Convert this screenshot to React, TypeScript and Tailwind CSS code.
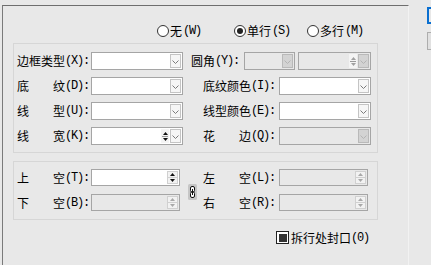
import React from 'react'

const mono = "font-['Liberation_Mono',monospace] text-[12px] tracking-[-1.2px]"

function Lbl({ head, tail, hot, className = '' }: { head?: string; tail: string; hot: string; className?: string }) {
  return (
    <div className={`shrink-0 flex items-center justify-between whitespace-nowrap text-[12px] leading-none text-black ${className}`}>
      {head && <span>{head}</span>}
      <span className="flex items-center whitespace-nowrap shrink-0">
        <span>{tail}</span>
        <span className={mono}>({hot}):</span>
      </span>
    </div>
  )
}

function Chevron({ dim }: { dim?: boolean }) {
  return (
    <svg width="7" height="4" viewBox="0 0 7 4" className="mb-[3px]">
      <path d="M0.5 0.5 L3.5 3.5 L6.5 0.5" fill="none" stroke={dim ? '#b4b4b4' : '#7a7a7a'} strokeWidth="1" />
    </svg>
  )
}

function MiniSpin({ dim }: { dim?: boolean }) {
  const c = dim ? '#a0a0a0' : '#111'
  return (
    <div className="w-[8px] mr-[1px] flex flex-col items-center justify-center gap-px bg-[#f4f4f4]">
      <svg width="5" height="3" viewBox="0 0 5 3"><path d="M0 3 L2.5 0 L5 3 Z" fill={c} /></svg>
      <div className="w-[6px] h-px bg-[#9a9a9a]" />
      <svg width="5" height="3" viewBox="0 0 5 3"><path d="M0 0 L2.5 3 L5 0 Z" fill={c} /></svg>
    </div>
  )
}

function Combo({ className = '', disabled, spin }: { className?: string; disabled?: boolean; spin?: boolean }) {
  return (
    <div
      className={`shrink-0 h-[18px] border border-[#a5a5a5] p-px flex justify-end ${
        disabled ? 'bg-[#e8e8e8]' : 'bg-white'
      } ${className}`}
    >
      {spin && <MiniSpin dim={disabled} />}
      <div
        className={`w-[11px] border flex items-end justify-center ${
          disabled ? 'border-[#b9b9b9] bg-[#d3d3d3]' : 'border-[#c4c4c4] bg-[#f6f6f6]'
        }`}
      >
        <Chevron dim={disabled} />
      </div>
    </div>
  )
}

function SpinBox({ disabled }: { disabled?: boolean }) {
  const c = disabled ? '#a8a8a8' : '#111'
  return (
    <div
      className={`shrink-0 h-[17px] w-[89px] border border-[#a5a5a5] p-px flex justify-end ${
        disabled ? 'bg-[#e8e8e8]' : 'bg-white'
      }`}
    >
      <div className="w-[11px] flex flex-col">
        <div className="flex-1 flex items-center justify-center border border-[#d0d0d0] bg-[#f2f2f2]">
          <svg width="5" height="3" viewBox="0 0 5 3"><path d="M0 3 L2.5 0 L5 3 Z" fill={c} /></svg>
        </div>
        <div className="flex-1 flex items-center justify-center border border-t-0 border-[#d0d0d0] bg-[#f2f2f2]">
          <svg width="5" height="3" viewBox="0 0 5 3"><path d="M0 0 L2.5 3 L5 0 Z" fill={c} /></svg>
        </div>
      </div>
    </div>
  )
}

function Radio({ label, hot, checked, className = '' }: { label: string; hot: string; checked?: boolean; className?: string }) {
  return (
    <div className={`flex items-center gap-px whitespace-nowrap text-[12px] leading-none ${className}`}>
      <div className="w-[12px] h-[12px] rounded-full border border-[#333] bg-white flex items-center justify-center">
        {checked && <div className="w-[6px] h-[6px] rounded-full bg-[#222]" />}
      </div>
      <span>{label}</span>
      <span className={mono}>({hot})</span>
    </div>
  )
}

export default function App() {
  return (
    <div className="w-[431px] h-[265px] bg-[#e8e8e8] overflow-hidden flex font-['Noto_Sans_CJK_SC',sans-serif] text-black">
      <div className="pt-[5px] pl-[2px]">
        <div className="w-[407px] h-[260px] border-t border-l border-r border-t-[#6e6e6e] border-l-[#7a7a7a] border-r-[#f2f2f2]">
          {/* mode radios */}
          <div className="mt-[18px] h-[14px] pl-[154px] flex items-center">
            <Radio label="无" hot="W" className="w-[77px]" />
            <Radio label="单行" hot="S" checked className="w-[73px]" />
            <Radio label="多行" hot="M" />
          </div>

          {/* border settings */}
          <div className="mt-[5px] ml-[10px] w-[365px] h-[110px] border border-[#d6d6d6] pt-[8px] pl-[3px] flex flex-col gap-[7px]">
            <div className="h-[18px] flex items-center">
              <Lbl tail="边框类型" hot="X" className="w-[72px]" />
              <Combo className="ml-[2px] w-[92px]" />
              <Lbl tail="圆角" hot="Y" className="ml-[8px] w-[48px]" />
              <Combo className="ml-[5px] w-[51px]" disabled />
              <Combo className="ml-[3px] w-[73px]" disabled spin />
            </div>
            <div className="h-[18px] flex items-center">
              <Lbl head="底" tail="纹" hot="D" className="w-[72px]" />
              <Combo className="ml-[2px] w-[92px]" />
              <Lbl tail="底纹颜色" hot="I" className="ml-[20px] w-[72px]" />
              <Combo className="ml-[4px] w-[92px]" />
            </div>
            <div className="h-[18px] flex items-center">
              <Lbl head="线" tail="型" hot="U" className="w-[72px]" />
              <Combo className="ml-[2px] w-[92px]" />
              <Lbl tail="线型颜色" hot="E" className="ml-[20px] w-[72px]" />
              <Combo className="ml-[4px] w-[92px]" />
            </div>
            <div className="h-[18px] flex items-center">
              <Lbl head="线" tail="宽" hot="K" className="w-[72px]" />
              <Combo className="ml-[2px] w-[92px]" spin />
              <Lbl head="花" tail="边" hot="Q" className="ml-[20px] w-[72px]" />
              <Combo className="ml-[4px] w-[92px]" disabled />
            </div>
          </div>

          {/* padding */}
          <div className="mt-[8px] ml-[10px] w-[365px] h-[59px] border border-[#d6d6d6] pt-[7px] pl-[3px] flex">
            <div className="flex flex-col gap-[8px]">
              <div className="h-[17px] flex items-center">
                <Lbl head="上" tail="空" hot="T" className="w-[72px]" />
                <div className="ml-[2px]"><SpinBox /></div>
              </div>
              <div className="h-[17px] flex items-center">
                <Lbl head="下" tail="空" hot="B" className="w-[72px]" />
                <div className="ml-[2px]"><SpinBox disabled /></div>
              </div>
            </div>
            <div className="ml-[8px] mt-[15px] self-start">
              <svg width="9" height="16" viewBox="0 0 9 16">
                <rect x="0" y="0" width="9" height="16" rx="1.5" fill="#c6c6c6" />
                <rect x="2.5" y="2.5" width="4" height="5.5" rx="1.5" fill="#fff" stroke="#111" />
                <rect x="2.5" y="8" width="4" height="5.5" rx="1.5" fill="#fff" stroke="#111" />
                <path d="M4.5 5 V11" stroke="#111" />
              </svg>
            </div>
            <div className="ml-[6px] flex flex-col gap-[8px]">
              <div className="h-[17px] flex items-center">
                <Lbl head="左" tail="空" hot="L" className="w-[72px]" />
                <div className="ml-[4px]"><SpinBox disabled /></div>
              </div>
              <div className="h-[17px] flex items-center">
                <Lbl head="右" tail="空" hot="R" className="w-[72px]" />
                <div className="ml-[4px]"><SpinBox disabled /></div>
              </div>
            </div>
          </div>

          {/* seal checkbox */}
          <div className="mt-[11px] ml-[273px] flex items-center whitespace-nowrap text-[12px] leading-none">
            <div className="w-[13px] h-[13px] border border-[#222] bg-white flex items-center justify-center">
              <div className="w-[8px] h-[8px] bg-[#333]" />
            </div>
            <span className="ml-[2px]">拆行处封口</span>
            <span className={mono}>(0)</span>
          </div>
        </div>
      </div>

      {/* neighbouring controls, cut off at the edge */}
      <div className="flex-1 pl-[18px] pt-[7px] flex flex-col gap-[8px]">
        <div className="w-[24px] h-[17px] border-2 border-[#0a6fd0] bg-[#e8e8e8]" />
        <div className="w-[24px] h-[18px] border border-[#adadad] bg-[#e1e1e1]" />
      </div>
    </div>
  )
}
